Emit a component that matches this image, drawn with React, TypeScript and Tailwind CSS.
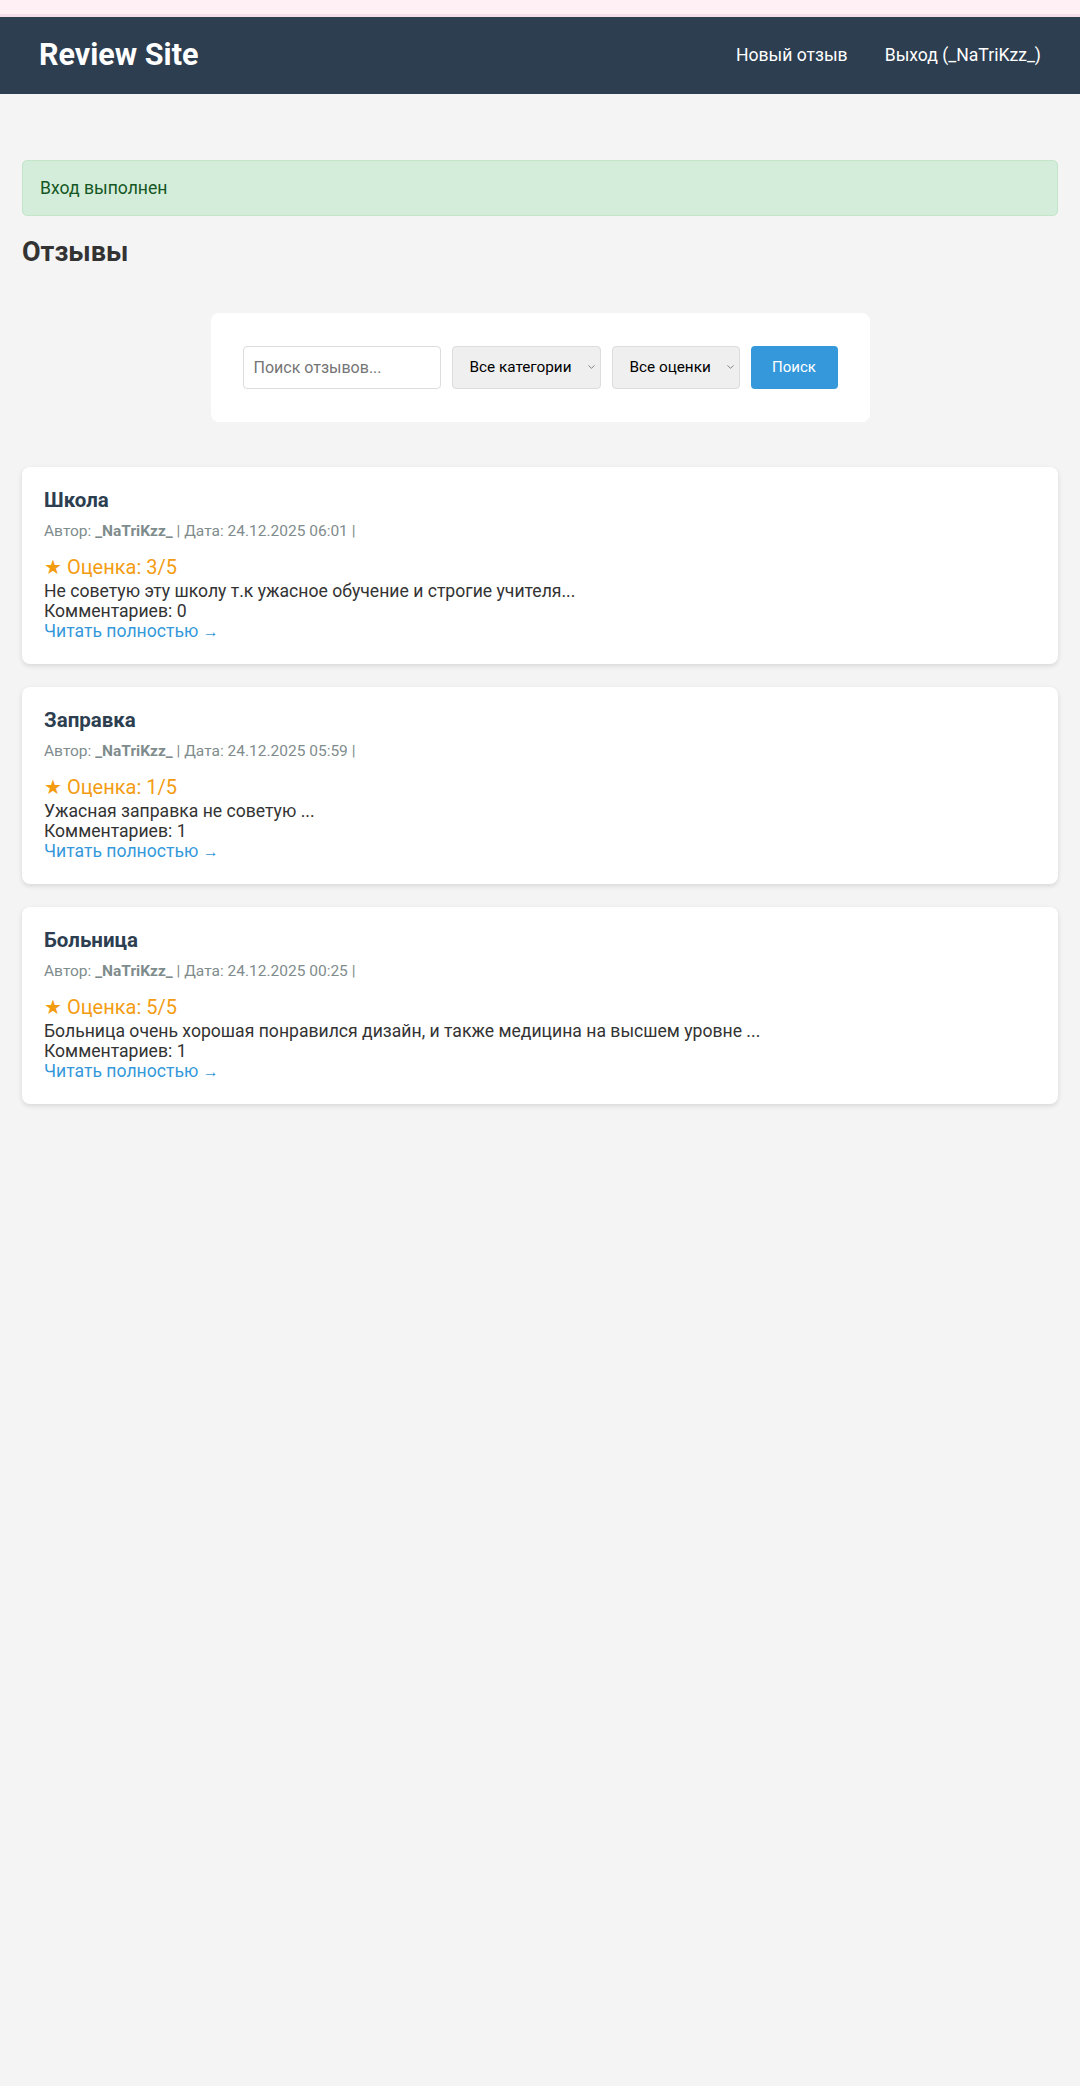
import { ChevronDown } from 'lucide-react';

interface Review {
  title: string;
  author: string;
  date: string;
  rating: number;
  excerpt: string;
  comments: number;
}

const reviews: Review[] = [
  {
    title: 'Школа',
    author: '_NaTriKzz_',
    date: '24.12.2025 06:01',
    rating: 3,
    excerpt: 'Не советую эту школу т.к ужасное обучение и строгие учителя...',
    comments: 0,
  },
  {
    title: 'Заправка',
    author: '_NaTriKzz_',
    date: '24.12.2025 05:59',
    rating: 1,
    excerpt: 'Ужасная заправка не советую ...',
    comments: 1,
  },
  {
    title: 'Больница',
    author: '_NaTriKzz_',
    date: '24.12.2025 00:25',
    rating: 5,
    excerpt: 'Больница очень хорошая понравился дизайн, и также медицина на высшем уровне ...',
    comments: 1,
  },
];

const Header = () => {
  return (
    <header className="h-[77px] bg-[#2c3e50] text-white flex items-center justify-between px-[39px]">
      <h1 className="text-[30.5px] font-bold leading-none">Review Site</h1>
      <nav className="flex items-center gap-[37px] text-[17.6px]">
        <a href="#">Новый отзыв</a>
        <a href="#">Выход (_NaTriKzz_)</a>
      </nav>
    </header>
  );
};

const SelectBox = ({ label, width }: { label: string; width: string }) => {
  return (
    <div className={`relative ${width}`}>
      <select className="w-full h-[43px] appearance-none bg-[#efefef] border border-[#dcdcdc] rounded-[4px] pl-[17px] pr-[22px] text-[15.3px] text-black">
        <option>{label}</option>
      </select>
      <ChevronDown
        className="pointer-events-none absolute right-[4px] top-1/2 -translate-y-1/2 w-[11px] h-[11px] text-[#555]"
        strokeWidth={1.5}
      />
    </div>
  );
};

const SearchForm = () => {
  return (
    <form className="mx-auto w-fit bg-white rounded-[8px] px-[32px] py-[33px] flex items-center gap-[11px]">
      <input
        type="text"
        placeholder="Поиск отзывов..."
        className="w-[198px] h-[43px] border border-[#dddddd] rounded-[4px] px-[10px] text-[16px] bg-white placeholder:text-[#757575]"
      />
      <SelectBox label="Все категории" width="w-[149px]" />
      <SelectBox label="Все оценки" width="w-[128px]" />
      <button type="button" className="h-[43px] w-[87px] bg-[#3498db] text-white rounded-[4px] text-[15px]">
        Поиск
      </button>
    </form>
  );
};

const ReviewCard = ({ review }: { review: Review }) => {
  return (
    <article className="bg-white rounded-[8px] shadow-[0_2px_5px_rgba(0,0,0,0.12)] p-[22px]">
      <h3 className="text-[20.5px] font-bold text-[#2c3e50] leading-[23.4px] mb-[11px]">{review.title}</h3>
      <p className="text-[15.5px] text-[#7f8c8d] leading-[17.6px] mb-[15px]">
        Автор: <strong className="font-bold">{review.author}</strong> | Дата: {review.date} |
      </p>
      <div className="text-[20px] text-[#f39c12] leading-[22.3px] mb-[4px]">★ Оценка: {review.rating}/5</div>
      <div className="text-[17.6px] text-[#333] leading-[19.9px]">
        <p>{review.excerpt}</p>
        <p>Комментариев: {review.comments}</p>
        <a href="#" className="text-[#3498db]">
          Читать полностью <span className="text-[16px]">→</span>
        </a>
      </div>
    </article>
  );
};

export default function App() {
  return (
    <div className="min-h-screen bg-[#f4f4f4] font-['Roboto',sans-serif] text-[#333]">
      <div className="h-[17px] bg-[#fff0f6] border-b-[3px] border-[#f2dfe9]" />
      <Header />
      <main className="px-[22px] pt-[66px]">
        <div className="h-[56px] flex items-center px-[17px] bg-[#d4edda] border border-[#c3e6cb] rounded-[5px] text-[#155724] text-[17.6px]">
          Вход выполнен
        </div>
        <h2 className="mt-[21px] text-[27px] font-bold leading-[31.6px] text-[#333]">Отзывы</h2>
        <div className="mt-[44px]">
          <SearchForm />
        </div>
        <section className="mt-[45px] flex flex-col gap-[23px]">
          {reviews.map((review, idx) => (
            <ReviewCard key={idx} review={review} />
          ))}
        </section>
      </main>
    </div>
  );
}
